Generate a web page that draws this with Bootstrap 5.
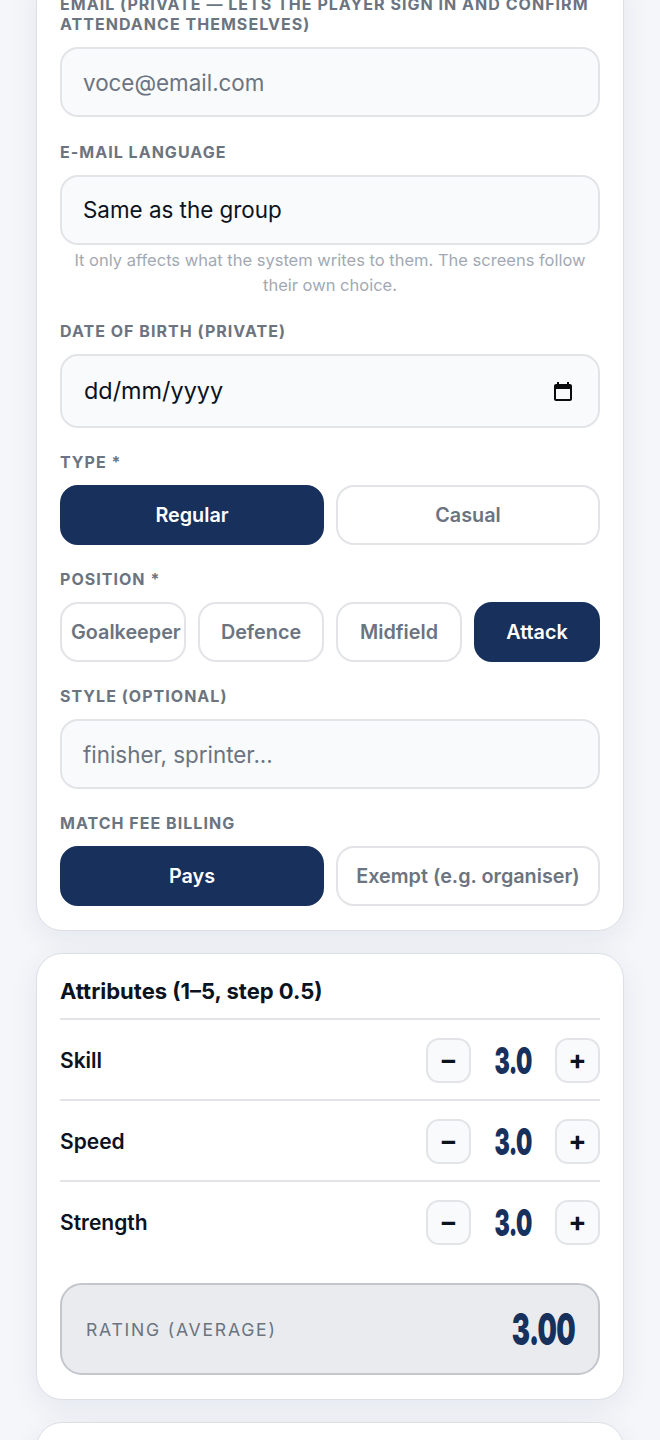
<!DOCTYPE html>
<html lang="en-GB">
<head>
<meta charset="utf-8">
<title>Player</title>
<link href="https://cdn.jsdelivr.net/npm/bootstrap@5.3.0/dist/css/bootstrap.min.css" rel="stylesheet">
<style>
html,body{height:1440px;overflow:hidden}
body{background:#f4f6fa;font-family:Inter,"Liberation Sans",sans-serif;color:#0b1220}
.shell{padding:0 36px;margin-top:-31px}
.panel{background:#fff;border:1px solid #dcdfe4;border-radius:26px;box-shadow:0 8px 30px rgba(20,35,70,.07);padding:24px 23px;margin-bottom:22px}
.panel-main{padding-bottom:24px}
.fld-label{display:block;font-size:16px;line-height:20px;font-weight:700;letter-spacing:1.03px;color:#6b7480;text-transform:uppercase;margin-bottom:13px}
.fld{margin-bottom:24px}
.fld-first{margin-bottom:25px}
.form-control.fld-input{height:70px;border:2px solid #e2e4e8;border-radius:18px;background:#f9fafc;font-size:22.4px;padding:0 21px;color:#0b1220;box-shadow:none}
.form-control.fld-input::placeholder{color:#6b7480;opacity:1}
.form-control.date-box{height:74px;font-size:23.4px;padding:0 25px 0 22px}
.hint-line{font-size:16.5px;line-height:25px;color:#a3a9b3;text-align:center;margin:3px 0 -1px;padding:0 12px}
.seg{display:grid;gap:12px}
.seg-2{grid-template-columns:minmax(0,1fr) minmax(0,1fr)}
.seg-4{grid-template-columns:repeat(4,minmax(0,1fr))}
.btn.seg-btn{height:60px;border:2px solid #e2e4e8;border-radius:18px;background:#fff;color:#6b7480;font-size:19.8px;font-weight:600;padding:2px 9px 0;white-space:nowrap}
.btn.seg-btn.on{background:#17305c;border-color:#17305c;color:#fff}
.attr-title{font-size:22px;font-weight:700;line-height:27px;padding-bottom:13px;border-bottom:2px solid #e2e4e8}
.attr-row{height:81px;padding-top:2px;border-bottom:2px solid #e2e4e8;font-size:21px;font-weight:600}
.attr-row.no-line{border-bottom-color:transparent}
.btn.step{width:45px;height:45px;padding:0 0 2px;border:2px solid #e2e4e8;border-radius:13px;background:#f9fafc;color:#0b1220;font-size:27px;font-weight:700;line-height:1}
.num{display:inline-block;font-family:Inter,"Liberation Sans",sans-serif;font-weight:900;color:#17305c;line-height:1}
.attr-num{width:84px;text-align:center;font-size:37px;letter-spacing:-1px;transform:scaleX(.62)}
.rate-box{height:92px;background:#e9ebef;border:2px solid #c3c6cc;border-radius:22px;padding:0 23px;margin-top:20px}
.rate-label{font-size:17.6px;letter-spacing:1.76px;color:#6b7480;text-transform:uppercase;padding:3px 0 0 1px}
.rate-num{font-size:44px;letter-spacing:-1px;transform:scaleX(.62);transform-origin:right center}
</style>
</head>
<body>
<div class="shell">
  <div class="panel panel-main">
    <div class="fld fld-first">
      <label class="fld-label">Email (private — lets the player sign in and confirm attendance themselves)</label>
      <input class="form-control fld-input" type="email" placeholder="voce@email.com">
    </div>
    <div class="fld">
      <label class="fld-label">E-mail language</label>
      <div class="form-control fld-input d-flex align-items-center">Same as the group</div>
      <p class="hint-line">It only affects what the system writes to them. The screens follow their own choice.</p>
    </div>
    <div class="fld">
      <label class="fld-label">Date of birth (private)</label>
      <div class="form-control fld-input date-box d-flex align-items-center justify-content-between">
        <span>dd/mm/yyyy</span>
        <svg width="20" height="20" viewBox="0 0 20 20" fill="#0b0b0b" aria-hidden="true"><path fill-rule="evenodd" d="M17 3h-1V1h-2v2H6V1H4v2H3c-1.1 0-2 .9-2 2v13c0 1.1.9 2 2 2h14c1.1 0 2-.9 2-2V5c0-1.100-.9-2-2-2zm0 15H3V8h14v10z"/></svg>
      </div>
    </div>
    <div class="fld">
      <label class="fld-label">Type *</label>
      <div class="seg seg-2">
        <button class="btn seg-btn on">Regular</button>
        <button class="btn seg-btn">Casual</button>
      </div>
    </div>
    <div class="fld">
      <label class="fld-label">Position *</label>
      <div class="seg seg-4">
        <button class="btn seg-btn">Goalkeeper</button>
        <button class="btn seg-btn">Defence</button>
        <button class="btn seg-btn">Midfield</button>
        <button class="btn seg-btn on">Attack</button>
      </div>
    </div>
    <div class="fld">
      <label class="fld-label">Style (optional)</label>
      <input class="form-control fld-input" type="text" placeholder="finisher, sprinter...">
    </div>
    <div>
      <label class="fld-label">Match fee billing</label>
      <div class="seg seg-2">
        <button class="btn seg-btn on">Pays</button>
        <button class="btn seg-btn">Exempt (e.g. organiser)</button>
      </div>
    </div>
  </div>
  <div class="panel">
    <div class="attr-title">Attributes (1–5, step 0.5)</div>
    <div class="attr-row d-flex align-items-center justify-content-between">
      <span>Skill</span>
      <div class="d-flex align-items-center"><button class="btn step">−</button><span class="num attr-num">3.0</span><button class="btn step">+</button></div>
    </div>
    <div class="attr-row d-flex align-items-center justify-content-between">
      <span>Speed</span>
      <div class="d-flex align-items-center"><button class="btn step">−</button><span class="num attr-num">3.0</span><button class="btn step">+</button></div>
    </div>
    <div class="attr-row no-line d-flex align-items-center justify-content-between">
      <span>Strength</span>
      <div class="d-flex align-items-center"><button class="btn step">−</button><span class="num attr-num">3.0</span><button class="btn step">+</button></div>
    </div>
    <div class="rate-box d-flex align-items-center justify-content-between">
      <span class="rate-label">Rating (average)</span>
      <span class="num rate-num">3.00</span>
    </div>
  </div>
  <div class="panel" style="height:200px"></div>
</div>
<script src="https://cdn.jsdelivr.net/npm/bootstrap@5.3.0/dist/js/bootstrap.bundle.min.js"></script>
</body>
</html>
